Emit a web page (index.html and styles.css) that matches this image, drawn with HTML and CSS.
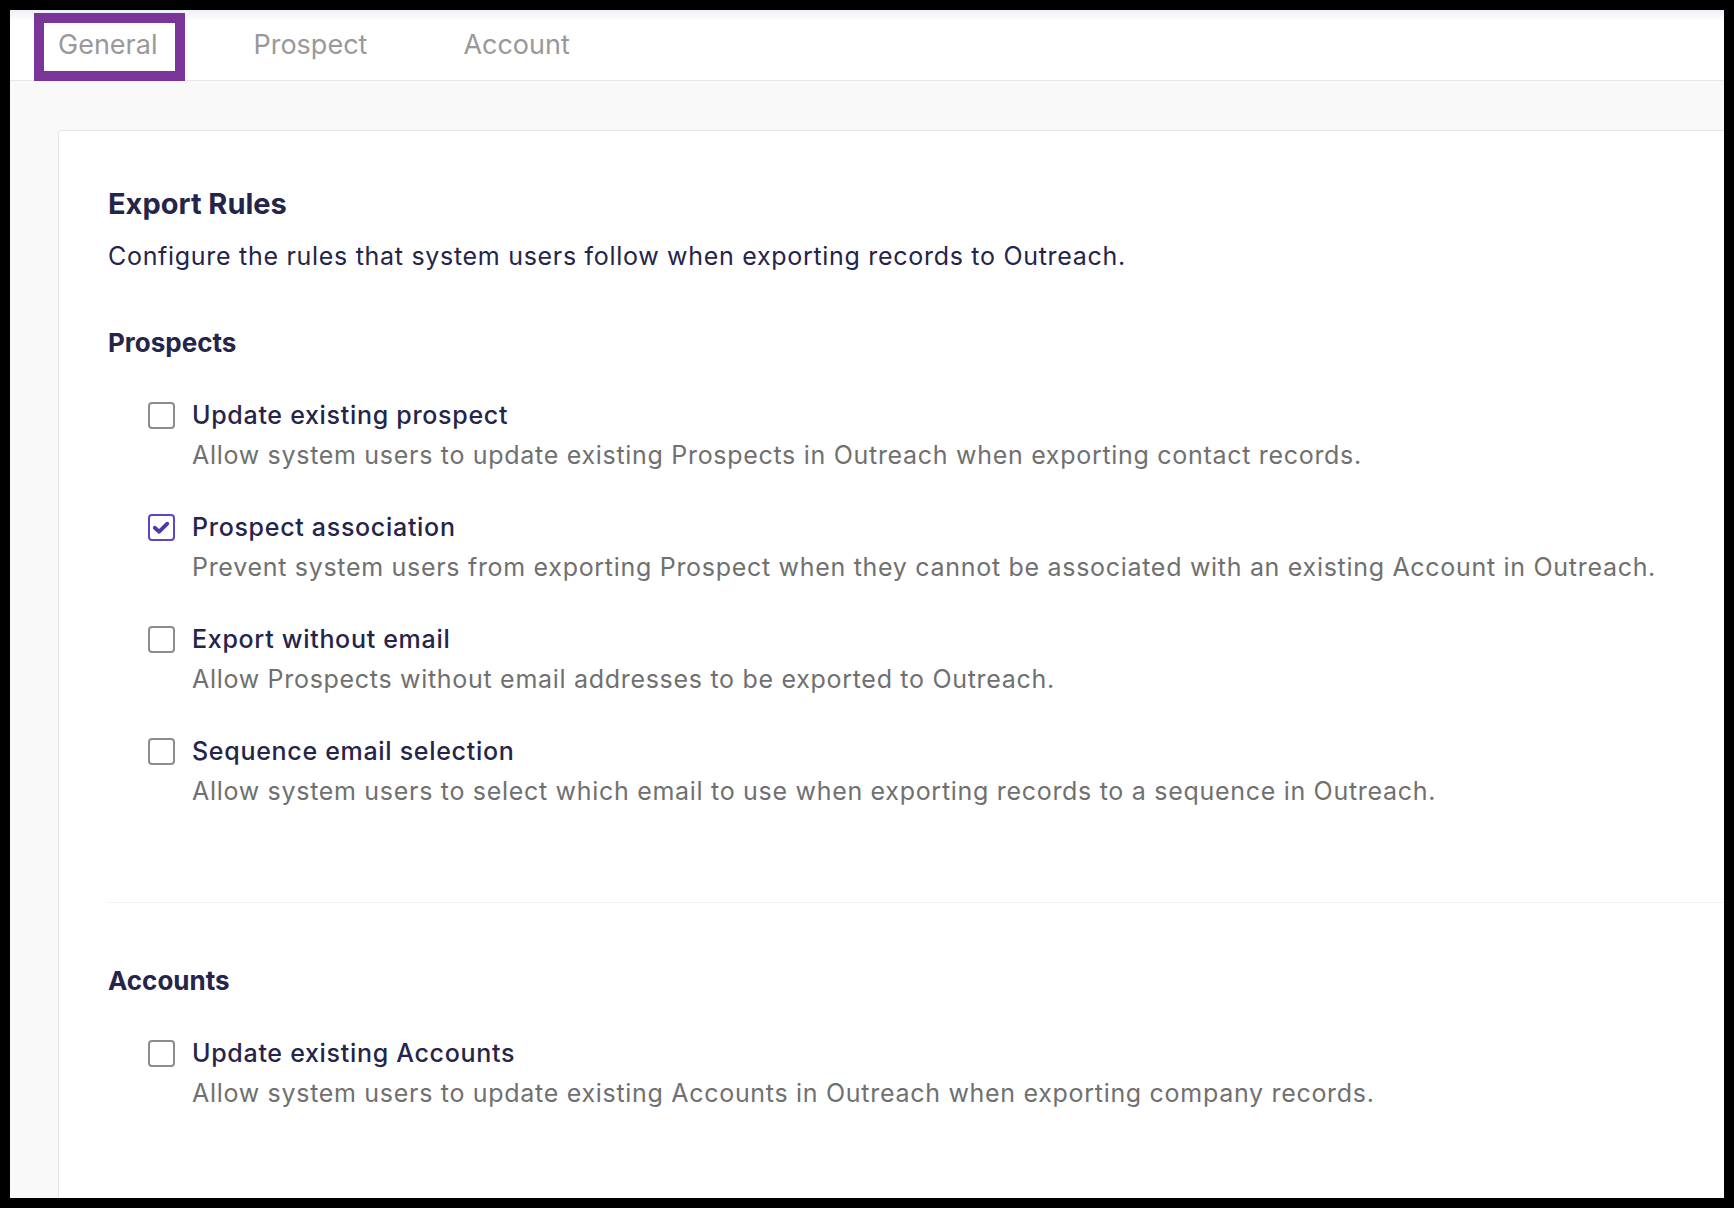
FILE: index.html
```html
<!DOCTYPE html>
<html lang="en">
  <head>
    <meta charset="UTF-8" />
    <meta name="viewport" content="width=device-width, initial-scale=1.0" />
    <title>Export Rules</title>
    <link rel="stylesheet" href="styles.css">
  </head>

  <body>
    <div class="window">
      <nav class="tabs">
        <a class="tab marked">General</a>
        <a class="tab">Prospect</a>
        <a class="tab">Account</a>
      </nav>
      <main class="content">
        <section class="card">
          <h1>Export Rules</h1>
          <p class="lead">Configure the rules that system users follow when exporting records to Outreach.</p>

          <div class="group">
            <h2>Prospects</h2>
            <ul class="rules">
              <li class="rule">
                <span class="box"></span>
                <div>
                  <div class="rule-title">Update existing prospect</div>
                  <div class="rule-desc">Allow system users to update existing Prospects in Outreach when exporting contact records.</div>
                </div>
              </li>
              <li class="rule">
                <span class="box checked">
                  <svg viewBox="0 0 24 24"><path d="M5 12.3 9.6 16.4 18 8" /></svg>
                </span>
                <div>
                  <div class="rule-title">Prospect association</div>
                  <div class="rule-desc">Prevent system users from exporting Prospect when they cannot be associated with an existing Account in Outreach.</div>
                </div>
              </li>
              <li class="rule">
                <span class="box"></span>
                <div>
                  <div class="rule-title">Export without email</div>
                  <div class="rule-desc">Allow Prospects without email addresses to be exported to Outreach.</div>
                </div>
              </li>
              <li class="rule">
                <span class="box"></span>
                <div>
                  <div class="rule-title">Sequence email selection</div>
                  <div class="rule-desc">Allow system users to select which email to use when exporting records to a sequence in Outreach.</div>
                </div>
              </li>
            </ul>
          </div>

          <div class="group accounts">
            <h2>Accounts</h2>
            <ul class="rules">
              <li class="rule">
                <span class="box"></span>
                <div>
                  <div class="rule-title">Update existing Accounts</div>
                  <div class="rule-desc">Allow system users to update existing Accounts in Outreach when exporting company records.</div>
                </div>
              </li>
            </ul>
          </div>
        </section>
      </main>
    </div>
  </body>
</html>
```

FILE: styles.css
```css
html,
body {
  margin: 0;
  background: #000;
  font-family: Inter, "Noto Sans", sans-serif;
  color: #25244b;
}
.window {
  margin: 10px;
  height: 1188px;
  overflow: hidden;
  background: #f9f9f9;
  display: flex;
  flex-direction: column;
}
.tabs {
  display: flex;
  height: 70px;
  background: linear-gradient(#eceff7, #fff 11px);
  border-bottom: 1px solid #e8e8e8;
}
.tab {
  position: relative;
  padding: 0 48px;
  font-size: 27px;
  line-height: 70px;
  color: #999;
}
/* purple highlight drawn over the first tab */
.tab.marked::after {
  content: "";
  position: absolute;
  left: 24px;
  right: 20px;
  top: 3px;
  bottom: -1px;
  border: 10px solid #7b3599;
}
.content {
  flex: 1;
  display: flex;
  padding: 49px 0 3px 48px;
}
.card {
  flex: 1;
  margin-right: -80px;
  padding: 55px 0 0 49px;
  background: #fff;
  border: 1px solid #e1e4e8;
  border-radius: 4px;
}
h1 {
  margin: 0;
  font-size: 29px;
  line-height: 36px;
  font-weight: 700;
}
.lead {
  margin: 14px 0 0;
  font-size: 25px;
  line-height: 40px;
  letter-spacing: 0.7px;
}
.group {
  margin-top: 47px;
  padding-bottom: 91px;
}
.group.accounts {
  margin-top: 0;
  padding-top: 58px;
  border-top: 1px solid #f2f2f2;
}
h2 {
  margin: 0;
  font-size: 26px;
  line-height: 40px;
  font-weight: 700;
}
.rules {
  list-style: none;
  margin: 32px 0 0;
  padding: 0 0 0 40px;
  display: flex;
  flex-direction: column;
  gap: 32px;
}
.rule {
  display: flex;
  gap: 17px;
  font-size: 25px;
  line-height: 40px;
}
.box {
  flex: none;
  box-sizing: border-box;
  width: 27px;
  height: 27px;
  margin-top: 7px;
  border: 2px solid #8c8c8c;
  border-radius: 4px;
  background: #fff;
}
.box.checked {
  border-color: #5b45c8;
}
.box svg {
  display: block;
  width: 100%;
  height: 100%;
  fill: none;
  stroke: #4a3aae;
  stroke-width: 4;
  stroke-linecap: round;
  stroke-linejoin: round;
}
.rule-title {
  font-weight: 500;
  letter-spacing: 0.7px;
}
.rule-desc {
  color: #707070;
  letter-spacing: 0.7px;
}
```
